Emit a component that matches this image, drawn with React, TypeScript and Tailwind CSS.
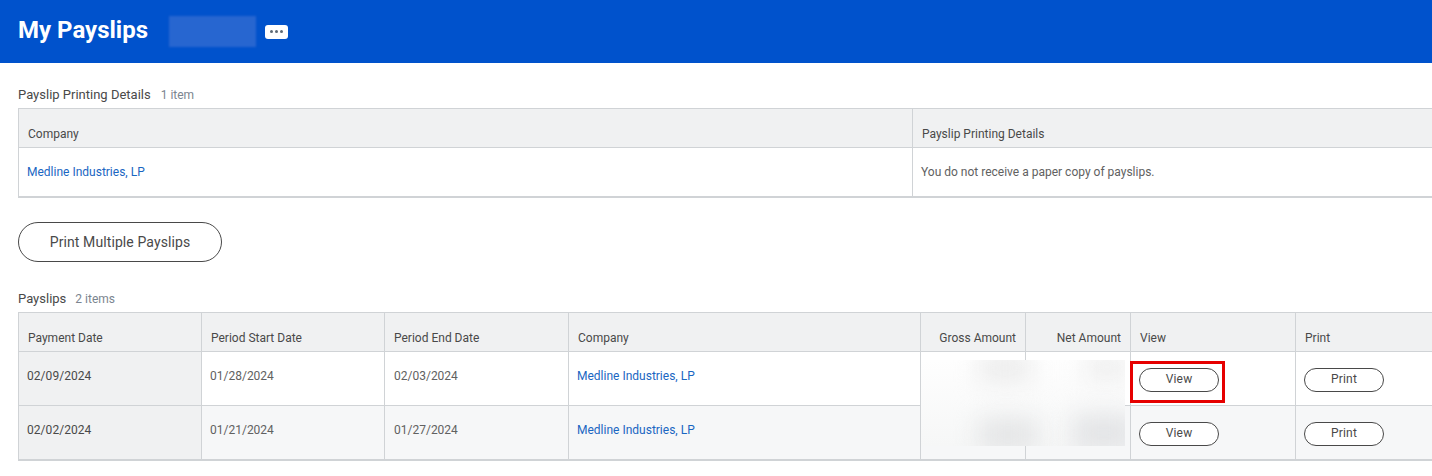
import React from "react"

const font = "font-['Roboto',sans-serif]"

function HeadCell({ children, right, last }: { children: React.ReactNode; right?: boolean; last?: boolean }) {
  return (
    <div
      className={`flex h-[39px] items-end border-b border-[#d0d3d6] bg-[#f0f1f2] pb-[5px] pl-[9px] pr-[9px] text-[12px] leading-[16px] text-[#494949] ${
        last ? "" : "border-r"
      } ${right ? "justify-end" : ""}`}
    >
      {children}
    </div>
  )
}

function PillButton({ label }: { label: string }) {
  return (
    <button className="flex h-[24px] w-[80px] items-center justify-center rounded-full border border-[#494949] bg-white pb-[2px] text-[12px] tracking-[0.2px] text-[#494949]">
      {label}
    </button>
  )
}

function PayslipRow({
  date,
  start,
  end,
  shaded,
  outlined,
}: {
  date: string
  start: string
  end: string
  shaded?: boolean
  outlined?: boolean
}) {
  const bg = shaded ? "bg-[#f6f7f8]" : "bg-white"
  const cell = `h-[53px] border-r border-[#d0d3d6] pt-[16px] text-[12px] leading-[16px] text-[#616161] ${bg}`
  return (
    <>
      <div className="h-[53px] border-r border-[#d0d3d6] bg-[#f0f1f2] pl-[8px] pt-[16px] text-[12px] leading-[16px] tracking-[0.05px] text-[#494949]">
        {date}
      </div>
      <div className={`${cell} pl-[8px]`}>{start}</div>
      <div className={`${cell} pl-[9px]`}>{end}</div>
      <div className={`${cell} pl-[8px]`}>
        <a className="text-[#1a66c2]">Medline Industries, LP</a>
      </div>
      <div className={cell}></div>
      <div className={cell}></div>
      <div className={`${cell} relative pl-[8px]`}>
        <PillButton label="View" />
        {outlined && (
          <div className="absolute left-[-1px] top-[9px] h-[42px] w-[95px] border-[3px] border-[#e60000]"></div>
        )}
      </div>
      <div className={`h-[53px] pl-[8px] pt-[16px] ${bg}`}>
        <PillButton label="Print" />
      </div>
    </>
  )
}

export default function App() {
  return (
    <div className={`h-[476px] w-[1432px] overflow-hidden bg-white ${font}`}>
      <header className="flex h-[63px] items-center bg-[#0052cc] pl-[18px]">
        <h1 className="-mt-[3px] text-[24px] leading-[28px] font-bold text-white">My Payslips</h1>
        <div className="-mt-[1px] ml-[21px] h-[31px] w-[87px] bg-[#2766d0] blur-[1px]"></div>
        <div className="ml-[9px] flex h-[14px] w-[23px] items-center justify-center gap-[2px] rounded-[3px] bg-white">
          <span className="h-[3px] w-[3px] rounded-full bg-[#5e6a75]"></span>
          <span className="h-[3px] w-[3px] rounded-full bg-[#5e6a75]"></span>
          <span className="h-[3px] w-[3px] rounded-full bg-[#5e6a75]"></span>
        </div>
      </header>

      <section className="pl-[18px] pt-[24px]">
        <div className="flex h-[16px] items-center text-[13px] leading-[16px]">
          <span className="text-[#494949]">Payslip Printing Details</span>
          <span className="ml-[10px] text-[12px] text-[#7b858f]">1 item</span>
        </div>
        <div className="mt-[5px] w-[1460px] border-b-2 border-l border-t border-[#d0d3d6]">
          <div className="grid grid-cols-[894px_1fr]">
            <HeadCell>Company</HeadCell>
            <HeadCell last>Payslip Printing Details</HeadCell>
            <div className="h-[48px] border-r border-[#d0d3d6] pl-[8px] pt-[16px] text-[12px] leading-[16px] text-[#1a66c2]">
              <a>Medline Industries, LP</a>
            </div>
            <div className="h-[48px] pl-[8px] pt-[16px] text-[12px] leading-[16px] text-[#616161]">
              You do not receive a paper copy of payslips.
            </div>
          </div>
        </div>
      </section>

      <div className="pl-[18px] pt-[24px]">
        <button className="flex h-[40px] w-[204px] items-center justify-center rounded-full border border-[#494949] bg-white text-[14px] tracking-[0.1px] text-[#494949]">
          Print Multiple Payslips
        </button>
      </div>

      <section className="pl-[18px] pt-[29px]">
        <div className="flex h-[16px] items-center text-[13px] leading-[16px]">
          <span className="text-[#494949]">Payslips</span>
          <span className="ml-[9px] text-[12px] text-[#7b858f]">2 items</span>
        </div>
        <div className="relative mt-[5px] w-[1460px] border-b-2 border-l border-t border-[#d0d3d6]">
          <div className="grid grid-cols-[183px_183px_184px_352px_105px_105px_165px_1fr]">
            <HeadCell>Payment Date</HeadCell>
            <HeadCell>Period Start Date</HeadCell>
            <HeadCell>Period End Date</HeadCell>
            <HeadCell>Company</HeadCell>
            <HeadCell right>Gross Amount</HeadCell>
            <HeadCell right>Net Amount</HeadCell>
            <HeadCell>View</HeadCell>
            <HeadCell last>Print</HeadCell>
            <PayslipRow date="02/09/2024" start="01/28/2024" end="02/03/2024" outlined />
            <div className="col-span-8 h-px bg-[#d0d3d6]"></div>
            <PayslipRow date="02/02/2024" start="01/21/2024" end="01/27/2024" shaded />
          </div>
          {/* redacted amounts */}
          <div className="absolute left-[902px] top-[47px] h-[86px] w-[204px] overflow-hidden bg-gradient-to-b from-[#fefefe] to-[#f6f7f7]">
            <div className="absolute left-[58px] top-[-6px] h-[28px] w-[52px] bg-[#ebebeb] blur-md"></div>
            <div className="absolute left-[164px] top-[-6px] h-[26px] w-[44px] bg-[#eeeeee] blur-md"></div>
            <div className="absolute left-[58px] top-[58px] h-[34px] w-[58px] bg-[#e4e5e6] blur-md"></div>
            <div className="absolute left-[152px] top-[54px] h-[38px] w-[62px] bg-[#e3e4e6] blur-md"></div>
          </div>
        </div>
      </section>
    </div>
  )
}
